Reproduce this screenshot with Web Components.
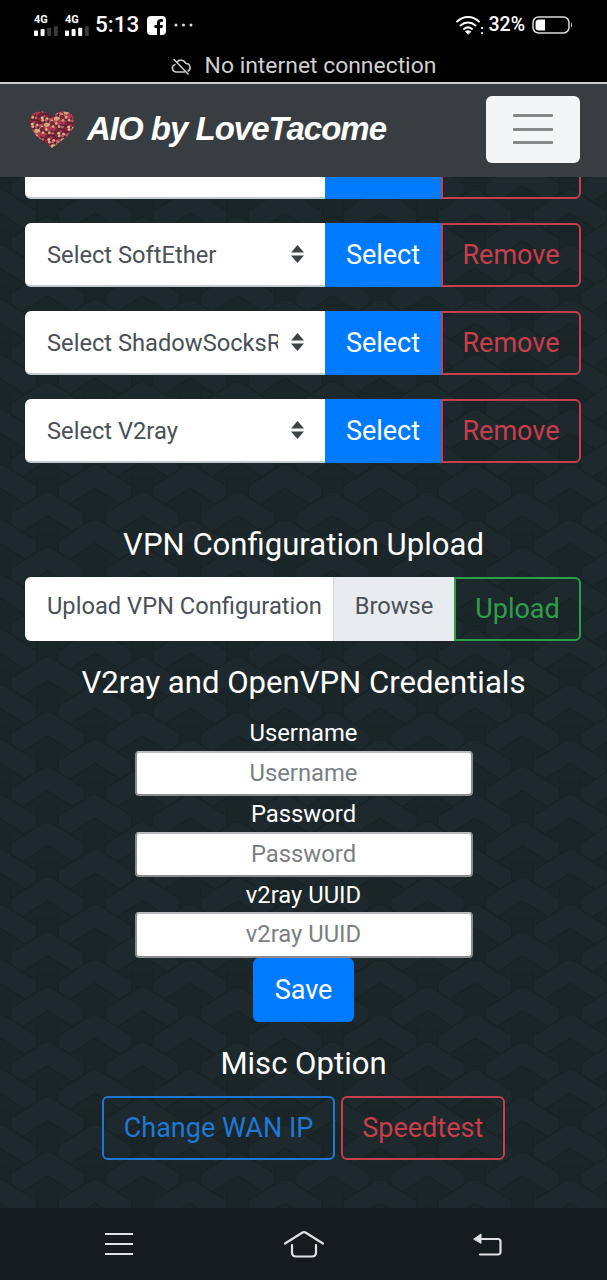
<!DOCTYPE html>
<html lang="en">
<head>
<meta charset="utf-8">
<title>AIO by LoveTacome</title>
<style>
  html, body { margin: 0; padding: 0; background: #000; }
  body { font-family: Roboto, "Liberation Sans", sans-serif; width: 607px; height: 1280px; overflow: hidden; }
  app-page { display: flex; flex-direction: column; height: 1280px; }
</style>
</head>
<body>
<app-page>
  <phone-status></phone-status>
  <app-navbar>AIO by LoveTacome</app-navbar>
  <page-main>
    <vpn-row blank></vpn-row>
    <vpn-row label="Select SoftEther"></vpn-row>
    <vpn-row label="Select ShadowSocksR"></vpn-row>
    <vpn-row label="Select V2ray"></vpn-row>
    <section-title style="margin-top:39px">VPN Configuration Upload</section-title>
    <upload-row></upload-row>
    <section-title style="margin-top:23px">V2ray and OpenVPN Credentials</section-title>
    <cred-field style="margin-top:15px" label="Username"></cred-field>
    <cred-field style="--lab:36px" label="Password"></cred-field>
    <cred-field style="--lab:35px;--inp:46px" label="v2ray UUID"></cred-field>
    <ui-btn kind="primary" style="align-self:center;padding:0 22px">Save</ui-btn>
    <section-title style="margin-top:23px">Misc Option</section-title>
    <misc-row>
      <ui-btn kind="outline-blue">Change WAN IP</ui-btn>
      <ui-btn kind="outline-red">Speedtest</ui-btn>
    </misc-row>
  </page-main>
  <soft-keys></soft-keys>
</app-page>

<script>
(function () {
  'use strict';

  /* Base: every element just stamps its markup in an open shadow root */
  class ShadowEl extends HTMLElement {
    connectedCallback() {
      if (this.shadowRoot) return;
      this.attachShadow({ mode: 'open' }).innerHTML = this.render();
    }
    render() { return ''; }
  }

  /* ── Android status bar + "no internet" strip ── */
  class PhoneStatus extends ShadowEl {
    signal(dim) {
      let bars = '';
      [0, 1, 2, 3].forEach((i) => {
        const h = 5.5 + i * 1.4;
        bars += `<rect x="${i * 6.6}" y="${10 - h}" width="4" height="${h}" rx=".8" fill="${i >= dim ? '#3c3c3c' : '#fff'}"/>`;
      });
      return `<span class="sig"><b>4G</b><svg width="25" height="10" viewBox="0 0 25 10">${bars}</svg></span>`;
    }
    render() {
      return `
        <style>
          :host { display: block; background: #000; color: #fff; height: 82px; border-bottom: 2px solid #c9cccc; box-sizing: content-box; flex: none; }
          .top { height: 50px; display: flex; align-items: center; padding: 0 34px; box-sizing: border-box; }
          .sig { display: flex; flex-direction: column; width: 25px; margin-right: 6px; margin-top: -1px; }
          .sig b { font: 700 11px/11px Roboto, sans-serif; height: 12px; }
          .sig svg { display: block; }
          .time { font: 500 22.500px/1 Roboto, sans-serif; margin-left: -1px; position: relative; top: -1px; }
          .fb { margin-left: 8px; display: block; }
          .dots { margin-left: 8px; display: block; }
          .right { margin-left: auto; display: flex; align-items: center; }
          .pct { font: 500 19.500px/1 Roboto, sans-serif; margin: 0 7px 0 5px; }
          .net { height: 32px; display: flex; align-items: center; justify-content: center; gap: 13px; color: #cfcfcf; font: 400 22.900px/1 Roboto, sans-serif; }
          .net svg { display: block; }
        </style>
        <div class="top">
          ${this.signal(2)}${this.signal(3)}
          <span class="time">5:13</span>
          <svg class="fb" width="19" height="19" viewBox="0 0 19 19"><path fill="#fff" fill-rule="evenodd" d="M4 0h11a4 4 0 0 1 4 4v11a4 4 0 0 1-4 4h-2v-7h2.4l.5-3H13V7.300c0-.9.400-1.500 1.500-1.500H16V3.200C15.500 3.100 14.600 3 13.800 3 11.500 3 10 4.400 10 6.900V9H7.500v3H10v7H4a4 4 0 0 1-4-4V4a4 4 0 0 1 4-4z"/></svg>
          <svg class="dots" width="19" height="4" viewBox="0 0 19 4" fill="#ddd"><circle cx="2" cy="2" r="1.500"/><circle cx="9.500" cy="2" r="1.500"/><circle cx="17" cy="2" r="1.500"/></svg>
          <span class="right">
            <svg width="27" height="20" viewBox="0 0 27 20" fill="none" stroke="#fff" stroke-width="2" stroke-linecap="round"><path d="M1 6.500C7.500 .5 16.500 .5 23 6.500"/><path d="M4.500 10.500c4.500-4 10.500-4 15 0"/><path d="M8 14c2.500-2 5.500-2 8 0"/><path d="M12 19l-2.500-2.500c1.500-1 3.500-1 5 0z" fill="#fff" stroke-width="1"/><circle cx="26" cy="13" r=".5" stroke-width="1.200"/><circle cx="26" cy="18" r=".5" stroke-width="1.200"/></svg>
            <span class="pct">32%</span>
            <svg width="41" height="18" viewBox="0 0 41 18" fill="none"><rect x="1" y="1" width="36" height="16" rx="5.500" stroke="#ddd" stroke-width="1.500"/><path d="M7 3.500h6v11H7a3.500 3.500 0 0 1-3.500-3.500V7A3.500 3.500 0 0 1 7 3.500z" fill="#fff"/><path d="M39 6.500c1.300.6 1.300 4.400 0 5z" fill="#ddd"/></svg>
          </span>
        </div>
        <div class="net">
          <svg width="21" height="17" viewBox="0 0 21 17" fill="none" stroke="#cfcfcf" stroke-width="1.500" stroke-linecap="round" stroke-linejoin="round"><path d="M6 4.200A5 5 0 0 1 14.800 5.500 4 4 0 0 1 17 13M13.500 14H5A3.800 3.800 0 0 1 4 6.600"/><path d="M3 1.500l14 14.500"/></svg>
          <span>No internet connection</span>
        </div>`;
    }
  }

  /* ── Navbar with the heart logo and toggler ── */
  class AppNavbar extends ShadowEl {
    heart() {
      // tan and red specks clipped to a heart, scattered with a small fixed sequence
      const cols = ['#d6ae84', '#b03a50', '#dcb990', '#7e2638', '#c2566c', '#cfa478', '#a32f45'];
      let dots = '', n = 5;
      for (let y = 1; y < 39; y += 3.1) {
        for (let x = 1; x < 47; x += 3.3) {
          n = (n * 37 + 11) % 101;
          const dx = (n % 5) - 2, dy = ((n >> 2) % 5) - 2;
          dots += `<circle cx="${(x + dx * .5).toFixed(1)}" cy="${(y + dy * .5).toFixed(1)}" r="${n % 4 === 0 ? 2.5 : 1.5}" fill="${cols[n % 7]}"/>`;
        }
      }
      return `<svg width="46" height="38" viewBox="0 0 46 38">
        <defs><clipPath id="h"><path d="M23 37C14 30 .5 22 .5 11 .5 4.500 5.500.5 11.500.5 16 .5 21 3 23 7 25 3 30 .5 34.500.5 40.500.5 45.500 4.500 45.500 11 45.500 22 32 30 23 37z"/></clipPath></defs>
        <g clip-path="url(#h)"><rect width="46" height="38" fill="#5e2230"/>${dots}</g></svg>`;
    }
    render() {
      return `
        <style>
          :host { display: flex; align-items: center; height: 93px; background: #383d41; padding: 0 27px 0 29px; box-sizing: border-box; flex: none; }
          .brand { margin: -5px 0 0 12px; color: #fff; font: italic 700 33px/1 "Liberation Sans", Arial, sans-serif; letter-spacing: -1px; white-space: nowrap; }
          .toggle { margin: -3px 0 0 auto; width: 94px; height: 67px; background: #f4f5f6; border-radius: 6px; display: flex; flex-direction: column; justify-content: center; align-items: center; gap: 10.500px; }
          .toggle i { display: block; width: 40px; height: 3px; background: #858789; border-radius: 1px; }
          svg { margin-top: -2px; flex: none; }
        </style>
        ${this.heart()}
        <span class="brand"><slot></slot></span>
        <span class="toggle"><i></i><i></i><i></i></span>`;
    }
  }

  /* ── Content area: flow column above the woven background ── */
  class PageMain extends ShadowEl {
    /* stacked chevrons with a stem, staggered per column, painted top to bottom */
    chevrons() {
      const spots = [];
      [-59, -31.5, -4, 23.5, 51, 78.5, 106, 133.5].forEach((y, i) => {
        // even entries sit on the 47 column, odd ones on the tile edges
        (i % 2 ? [0, 95] : [47.5]).forEach((x) => spots.push([x, y]));
      });
      return spots.map(([x, y]) => {
        const arms = `M${x - 30} ${y + 19}L${x} ${y}L${x + 30} ${y + 19}`;
        const stem = `M${x} ${y - 27}V${y}`;
        return `<path d="${stem}" stroke="#192326" stroke-width="23"/><path d="${stem}" stroke="#1a2528" stroke-width="20"/>` +
          `<path d="${arms}" stroke="#192326" stroke-width="23.500" stroke-linecap="round"/>` +
          `<path d="${arms}" stroke="#1d292c" stroke-width="20" stroke-linecap="round"/>`;
      }).join('');
    }
    render() {
      return `
        <style>
          :host { display: block; position: relative; height: 1031px; background: #1b2629; overflow: hidden; flex: none; }
          svg { position: absolute; inset: 0; }
          .flow { position: relative; display: flex; flex-direction: column; padding: 0 25px; margin-top: -42px; }
        </style>
        <svg width="607" height="1031">
          <defs>
            <pattern id="weave" width="95" height="55" patternUnits="userSpaceOnUse">
              <g fill="none" stroke-linejoin="round">${this.chevrons()}</g>
            </pattern>
          </defs>
          <rect width="607" height="1031" fill="url(#weave)"/>
        </svg>
        <div class="flow"><slot></slot></div>`;
    }
  }

  /* ── Buttons ── */
  class UiBtn extends ShadowEl {
    render() {
      return `
        <style>
          :host { display: inline-flex; align-items: center; justify-content: center; height: 64px; box-sizing: border-box; padding: 0 19.500px; font: 400 27px/1 Roboto, sans-serif; border-radius: 6px; white-space: nowrap; flex: none; }
          :host([kind="primary"]) { background: #007bff; color: #fff; }
          :host([kind="outline-blue"]) { border: 2px solid #1f78d4; color: #1f78d4; }
          :host([kind="outline-red"]) { border: 2px solid #c73e4c; color: #c73e4c; }
          :host([kind="outline-green"]) { border: 2px solid #2f9e4b; color: #2f9e4b; }
          :host([joined]) { border-top-left-radius: 0; border-bottom-left-radius: 0; }
          :host([square]) { border-radius: 0; }
        </style>
        <slot></slot>`;
    }
  }

  /* ── select + Select + Remove ── */
  class VpnRow extends ShadowEl {
    render() {
      const label = this.getAttribute('label') || '';
      // the first row is scrolled under the navbar, only its bottom edge shows
      const blank = this.hasAttribute('blank');
      return `
        <style>
          :host { display: flex; height: 64px; margin-bottom: 24px; flex: none; }
          .sel { width: 300px; box-sizing: border-box; background: #fff; border-radius: 6px 0 0 6px; border-bottom: 2px solid #c3ccd2; display: flex; align-items: center; padding-left: 22px; color: #495057; font: 400 23.700px/34px Roboto, sans-serif; }
          .txt { width: 231px; height: 34px; overflow: hidden; white-space: nowrap; padding-top: 1px; }
          .car { margin-left: 13px; display: block; }
          ui-btn.s { width: 116px; padding: 0; }
          ui-btn.r { width: 140px; padding: 0; }
        </style>
        <div class="sel"><span class="txt">${label}</span>
          ${blank ? '' : '<svg class="car" width="13" height="18" viewBox="0 0 13 18" fill="#3d4247"><path d="M6.500 0L13 7.500H0zM6.500 18L0 10.500h13z"/></svg>'}
        </div>
        <ui-btn class="s" kind="primary" square>${blank ? '' : 'Select'}</ui-btn>
        <ui-btn class="r" kind="outline-red" joined>${blank ? '' : 'Remove'}</ui-btn>`;
    }
  }

  /* ── File picker row ── */
  class UploadRow extends ShadowEl {
    render() {
      return `
        <style>
          :host { display: flex; height: 64px; flex: none; margin-top: 15px; color: #495057; font: 400 23.700px/1 Roboto, sans-serif; }
          .file { width: 308px; box-sizing: border-box; background: #fff; border-radius: 6px 0 0 6px; display: flex; align-items: center; padding: 0 0 4px 22px; white-space: nowrap; }
          .browse { width: 121px; box-sizing: border-box; background: #e9ecef; display: flex; align-items: center; justify-content: center; border-left: 1px solid #ced4da; padding-bottom: 4px; }
          ui-btn { width: 127px; padding: 0; }
        </style>
        <div class="file">Upload VPN Configuration</div>
        <div class="browse">Browse</div>
        <ui-btn kind="outline-green" joined>Upload</ui-btn>`;
    }
  }

  class SectionTitle extends ShadowEl {
    render() {
      return `
        <style>
          :host { display: block; height: 36px; text-align: center; color: #fff; font: 400 31.100px/38px Roboto, sans-serif; flex: none; white-space: nowrap; }
        </style>
        <slot></slot>`;
    }
  }

  /* ── Label over a centred input ── */
  class CredField extends ShadowEl {
    render() {
      const label = this.getAttribute('label');
      return `
        <style>
          :host { display: flex; flex-direction: column; align-items: center; flex: none; color: #fff; font: 400 23.800px/36px Roboto, sans-serif; }
          .lab { height: var(--lab, 36px); }
          .inp { width: 338px; height: var(--inp, 45px); box-sizing: border-box; background: #fff; border: 2px solid #8a8e90; border-top-color: #b9bcbe; border-radius: 4px; color: #7b7f83; text-align: center; line-height: 41px; }
        </style>
        <div class="lab">${label}</div>
        <div class="inp">${label}</div>`;
    }
  }

  class MiscRow extends ShadowEl {
    render() {
      return `
        <style>
          :host { display: flex; justify-content: center; gap: 6px; margin-top: 15px; flex: none; }
        </style>
        <slot></slot>`;
    }
  }

  /* ── Android navigation keys ── */
  class SoftKeys extends ShadowEl {
    render() {
      return `
        <style>
          :host { display: flex; height: 72px; background: #141c1f; align-items: center; justify-content: space-between; padding: 0 104px 0 104px; box-sizing: border-box; flex: none; }
          svg { display: block; fill: none; stroke: #dfe2e3; stroke-width: 2.200; }
        </style>
        <svg width="30" height="24" viewBox="0 0 30 24"><path d="M1 2h28M1 12h28M1 22h28"/></svg>
        <svg width="42" height="28" viewBox="0 0 42 28" stroke-linecap="round" stroke-linejoin="round"><path d="M2 13.500L19.500 2.500c1-.6 2-.6 3 0L40 13.500"/><path d="M9 15v8a3.500 3.500 0 0 0 3.500 3.500h17A3.500 3.500 0 0 0 33 23v-8"/></svg>
        <svg width="30" height="26" viewBox="0 0 30 26" stroke-linecap="round" stroke-linejoin="round"><path d="M5 8h20a2.500 2.500 0 0 1 2.500 2.500v10.500a2.500 2.500 0 0 1-2.500 2.500H7"/><path d="M1 8l7-5v9z" fill="#dfe2e3" stroke-width="1"/></svg>`;
    }
  }

  customElements.define('phone-status', PhoneStatus);
  customElements.define('app-navbar', AppNavbar);
  customElements.define('page-main', PageMain);
  customElements.define('ui-btn', UiBtn);
  customElements.define('vpn-row', VpnRow);
  customElements.define('upload-row', UploadRow);
  customElements.define('section-title', SectionTitle);
  customElements.define('cred-field', CredField);
  customElements.define('misc-row', MiscRow);
  customElements.define('soft-keys', SoftKeys);
})();
</script>
</body>
</html>
